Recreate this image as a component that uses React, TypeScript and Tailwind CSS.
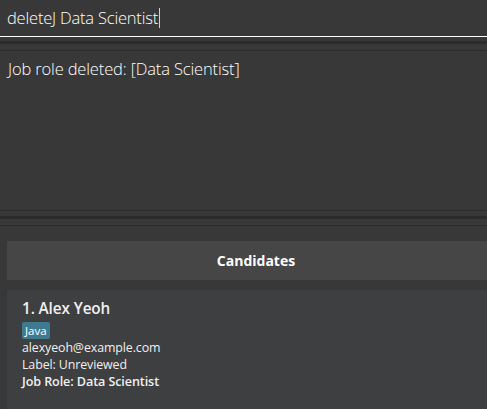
import React from "react";

const font = { fontFamily: '"Open Sans", "Noto Sans", sans-serif' };

export default function App() {
  return (
    <div className="w-[487px] h-[409px] overflow-hidden bg-[#383838] flex flex-col" style={font}>
      {/* command box */}
      <div className="h-[37px] shrink-0 border-b border-white flex items-center px-[7px]">
        <span className="text-[16.5px] font-light text-white leading-none tracking-[-0.2px]">deleteJ Data Scientist</span>
        <span className="w-px h-[20px] bg-[#d0d0d0] ml-[1px]" />
      </div>
      <div className="h-[4px] shrink-0" />
      <div className="h-[3px] shrink-0 bg-[#2b2b2b]" />
      <div className="h-[6px] shrink-0" />
      <div className="h-px shrink-0 bg-[#2c2c2c]" />
      {/* result display */}
      <div className="h-[159px] shrink-0 px-[8px] pt-[7px]">
        <p className="text-[16.5px] font-light text-white leading-[22px] tracking-[-0.15px]">Job role deleted: [Data Scientist]</p>
      </div>
      <div className="h-px shrink-0 bg-[#2c2c2c]" />
      <div className="h-[5px] shrink-0" />
      <div className="h-[3px] shrink-0 bg-[#2b2b2b]" />
      <div className="h-[6px] shrink-0" />
      <div className="h-px shrink-0 bg-[#2c2c2c]" />
      {/* list panel */}
      <div className="flex-1 pl-[7px] pt-[15px] flex flex-col w-[505px]">
        <div className="h-[39px] shrink-0 bg-[#464646] flex items-center justify-center">
          <span className="text-[14px] font-bold text-white">Candidates</span>
        </div>
        <div className="h-[10px] shrink-0" />
        <div className="flex-1 bg-[#3e3f41] pl-[15px] pt-[8px]">
          <div className="text-[15.3px] font-semibold text-[#f0f0f0] leading-[21px] tracking-[-0.1px]">1. Alex Yeoh</div>
          <div className="flex mt-[3px]">
            <span className="bg-[#3e7b91] text-white text-[11.5px] leading-[15px] px-[3px] py-px rounded-[2px]">Java</span>
          </div>
          <div className="text-[12.4px] text-[#f0f0f0] leading-[17px] tracking-[-0.1px]">alexyeoh@example.com</div>
          <div className="text-[12.4px] text-[#f0f0f0] leading-[17px] tracking-[-0.1px]">Label: Unreviewed</div>
          <div className="text-[12.6px] font-semibold text-[#f0f0f0] leading-[18px] tracking-[-0.1px]">Job Role: Data Scientist</div>
        </div>
      </div>
    </div>
  );
}
